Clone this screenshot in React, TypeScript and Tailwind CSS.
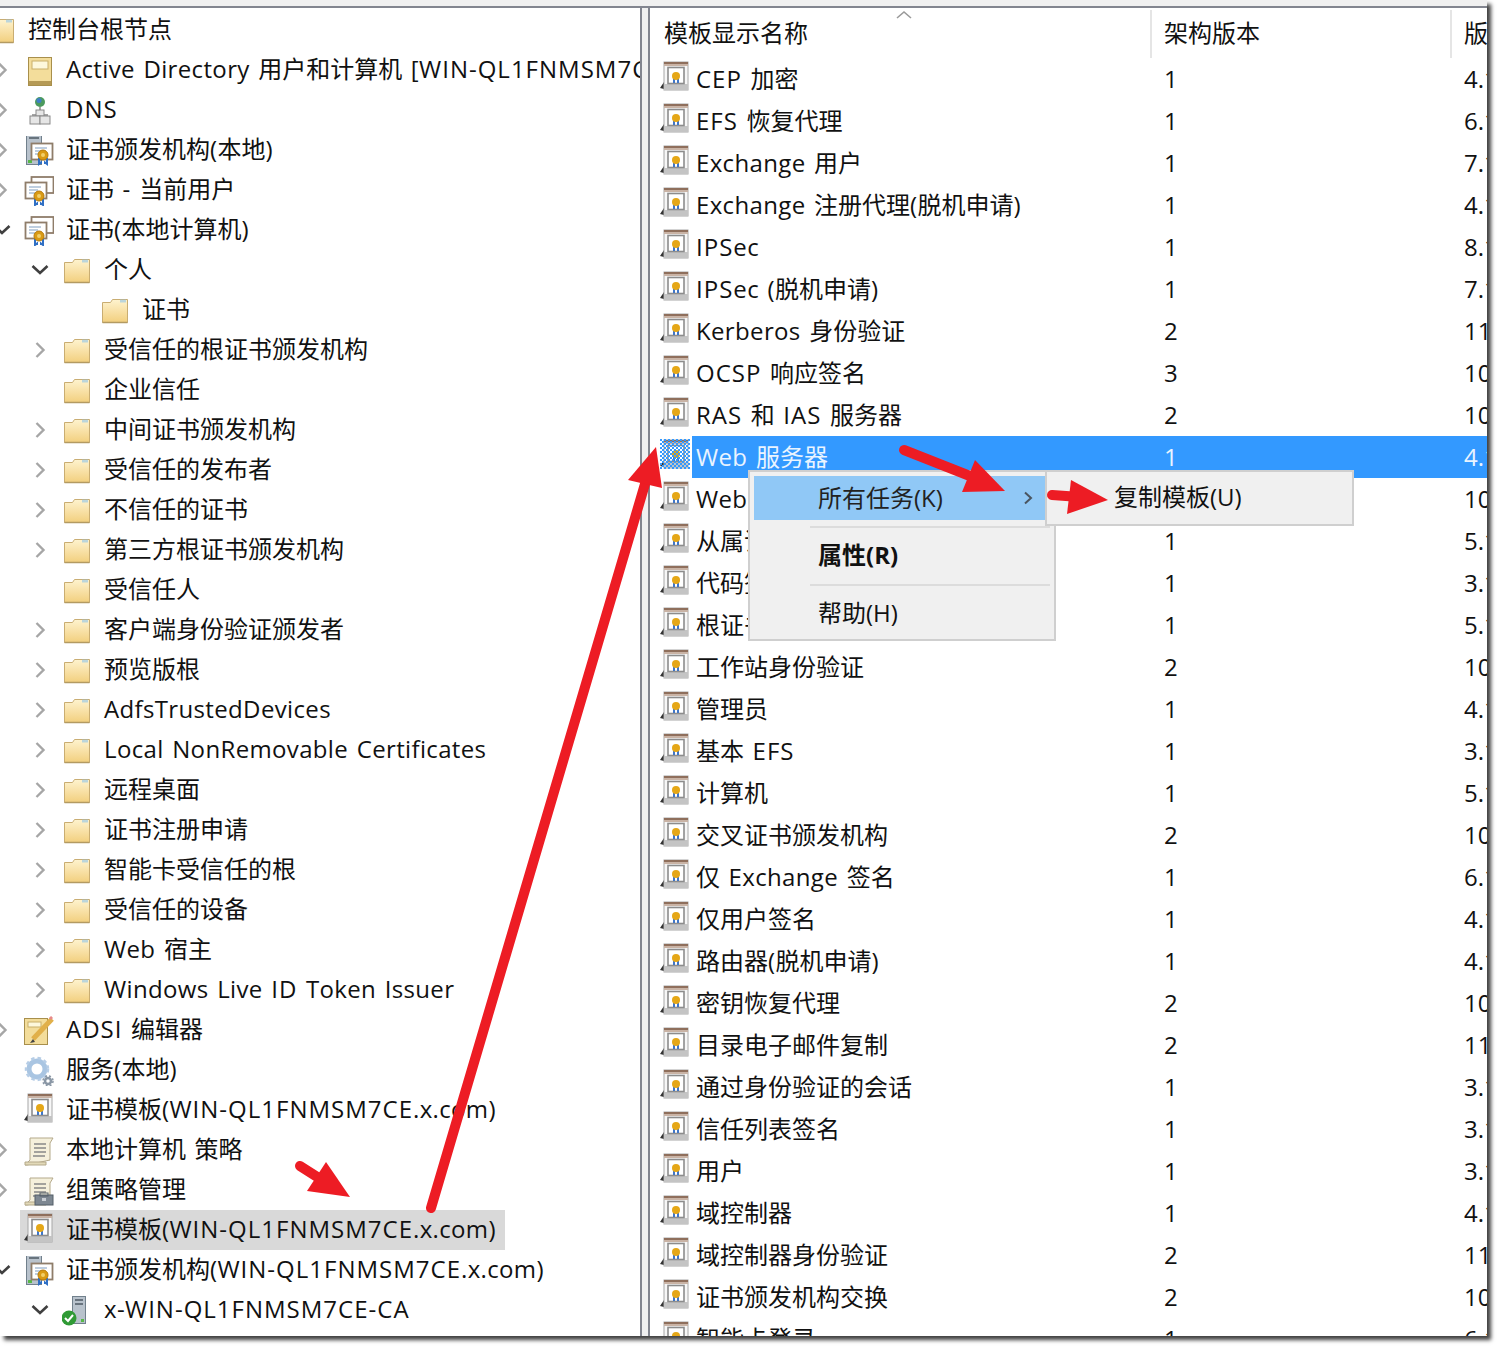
const FONT = "font-['Open_Sans','Noto_Sans_CJK_SC',sans-serif]"

const INDENT = ['-ml-[38px]', 'ml-0', 'ml-[38px]', 'ml-[76px]']

type IconName = 'folder' | 'box' | 'dns' | 'ca' | 'certs' | 'adsi' | 'gear' | 'tpl' | 'policy' | 'gpo' | 'server'

// the reference's latin font runs wider than Open Sans, capitals most of all
function Txt({ s }: { s: string }) {
  const parts = s.split(/([A-Z0-9][-A-Z0-9]+|[\u4e00-\u9fff]+)/).filter(Boolean)
  return (
    <>
      {parts.map((p, i) => {
        if (/^[\u4e00-\u9fff]/.test(p)) return <span key={i}>{p}</span>
        if (/^[A-Z0-9][-A-Z0-9]+$/.test(p)) return <span key={i} className="tracking-[1px]">{p}</span>
        return <span key={i} className="tracking-[0.35px] [word-spacing:2px]">{p}</span>
      })}
    </>
  )
}

function Folder() {
  return (
    <svg width="30" height="30" viewBox="0 0 30 30">
      <defs>
        <linearGradient id="fold" x1="0" y1="0" x2="0" y2="1">
          <stop offset="0" stopColor="#fef3cf" />
          <stop offset="1" stopColor="#f2cf7e" />
        </linearGradient>
      </defs>
      <path d="M2.5 6.5h8l2-3h15v23h-25z" fill="url(#fold)" stroke="#c9ad72" />
      <path d="M20 3.5h6v3h-6z" fill="#8fc3e8" opacity=".6" />
      <path d="M2.5 26.5h25" stroke="#b39a62" strokeWidth="1.5" />
    </svg>
  )
}

function Seal({ x, y }: { x: number; y: number }) {
  return (
    <g>
      <path d={`M${x - 4} ${y + 3}v6l2-1.5v1.5M${x + 4} ${y + 3}v6l-2-1.5v1.5`} stroke="#2f6fc4" strokeWidth="2" fill="none" />
      <circle cx={x} cy={y} r="5" fill="#d99a14" stroke="#b87a0a" />
      <circle cx={x} cy={y} r="2" fill="#f3cf6a" />
    </g>
  )
}

function Cert({ x, y }: { x: number; y: number }) {
  return (
    <g transform={`translate(${x} ${y})`}>
      <rect x="0.5" y="0.5" width="21" height="16" fill="#fff" stroke="#8f7d6a" strokeWidth="1.8" />
      <path d="M4 5h12M4 8h9M4 11h7" stroke="#a9bfd6" strokeWidth="1.4" />
    </g>
  )
}

function Template({ selected }: { selected?: boolean }) {
  return (
    <svg width="30" height="30" viewBox="0 0 30 30">
      <defs>
        <pattern id="dith" width="4" height="4" patternUnits="userSpaceOnUse">
          <rect width="2" height="2" fill="#3399ff" />
          <rect x="2" y="2" width="2" height="2" fill="#3399ff" />
        </pattern>
      </defs>
      <path d="M0 27l4-6v7z" fill="#333" />
      <rect x="4" y="1" width="24" height="28" fill="#f7f7f7" stroke="#a8a8a8" />
      <rect x="4" y="1" width="24" height="4" fill="#c9b3a5" />
      <rect x="4" y="1" width="24" height="2" fill="#8f6f5c" />
      <rect x="4" y="23" width="24" height="6" fill="#c4c4c4" />
      <rect x="8" y="6.5" width="16" height="16" fill="#fff" stroke="#8c8c8c" strokeWidth="1.6" />
      <path d="M14 17v5M18 17v5" stroke="#3f76c8" strokeWidth="2" />
      <circle cx="16" cy="15" r="4" fill="#e5a717" />
      {selected && <rect width="30" height="30" fill="url(#dith)" />}
    </svg>
  )
}

function TreeIcon({ name }: { name: IconName }) {
  if (name === 'folder') return <Folder />
  if (name === 'tpl')
    return (
      <span className="block -translate-y-[3px]">
        <Template />
      </span>
    )
  return (
    <svg width="30" height="30" viewBox="0 0 30 30">
      {name === 'box' && (
        <g>
          <rect x="4.5" y="1.5" width="23" height="28" fill="#f3dd9b" stroke="#a88f4c" />
          <rect x="8" y="5" width="16" height="8" fill="#fdf8dc" stroke="#c9b06a" />
          <rect x="5" y="25" width="22" height="4" fill="#b59a55" />
        </g>
      )}
      {name === 'dns' && (
        <g>
          <circle cx="16" cy="6" r="5" fill="#4c9a5e" />
          <circle cx="15" cy="4.5" r="2.5" fill="#3f7fc8" />
          <path d="M16 11v8M8 19h16" stroke="#888" strokeWidth="1.5" />
          <rect x="12" y="14" width="8" height="6" fill="#e6e6e6" stroke="#8a8a8a" />
          <rect x="6" y="20" width="10" height="8" fill="#e6e6e6" stroke="#8a8a8a" />
          <rect x="16" y="20" width="10" height="8" fill="#e6e6e6" stroke="#8a8a8a" />
        </g>
      )}
      {name === 'ca' && (
        <g transform="translate(0 -2)">
          <rect x="2.5" y="0.5" width="15" height="30" fill="#b8c2cc" stroke="#71808c" />
          <path d="M5 4h10" stroke="#4e5a64" strokeWidth="1.5" />
          <rect x="4" y="26" width="4" height="3" fill="#57b947" />
          <Cert x={7} y={9} />
          <Seal x={19} y={21} />
        </g>
      )}
      {name === 'certs' && (
        <g>
          <rect x="7.5" y="1" width="22" height="16" fill="#fff" stroke="#8f7d6a" strokeWidth="1.8" />
          <Cert x={1} y={6} />
          <Seal x={15} y={20} />
        </g>
      )}
      {name === 'adsi' && (
        <g>
          <rect x="0.5" y="2.5" width="23" height="26" fill="#f3dd9b" stroke="#a88f4c" />
          <rect x="4" y="6" width="13" height="5" fill="#fdf8dc" stroke="#c9b06a" />
          <path d="M28 3L9 23" stroke="#e1b04a" strokeWidth="5" />
          <path d="M28 3l-2-2" stroke="#e88a8a" strokeWidth="3" />
          <path d="M9 23l-3 4 5-1z" fill="#444" />
        </g>
      )}
      {name === 'gear' && (
        <g fill="none">
          <circle cx="13" cy="13" r="8" stroke="#a9c5e2" strokeWidth="5" />
          <circle cx="13" cy="13" r="11" stroke="#b6cde6" strokeWidth="2.5" strokeDasharray="3.5 3" />
          <circle cx="24" cy="25" r="3" stroke="#8a97a5" strokeWidth="2.5" />
          <circle cx="24" cy="25" r="5" stroke="#8a97a5" strokeWidth="1.5" strokeDasharray="2 2" />
        </g>
      )}
      {(name === 'policy' || name === 'gpo') && (
        <g>
          <path d="M6 2h23l-3 5v17l-23 5h-2l5-5z" fill="#f5f0dc" stroke="#b4a98a" />
          <path d="M1 26h21v3h-21z" fill="#e2d9b8" stroke="#b4a98a" />
          <path d="M10 8h12M10 12h12M10 16h12M9 20h12" stroke="#888" strokeWidth="1.5" />
          {name === 'gpo' && (
            <g>
              <rect x="11" y="19" width="18" height="10" fill="#7d8791" stroke="#555f69" />
              <rect x="16" y="17" width="8" height="3" fill="none" stroke="#555f69" />
              <rect x="18" y="22" width="4" height="3" fill="#c9ced4" />
            </g>
          )}
        </g>
      )}
      {name === 'server' && (
        <g>
          <rect x="10.5" y="0.5" width="13" height="27" fill="#b8c2cc" stroke="#71808c" />
          <path d="M13 4h8M13 8h8" stroke="#4e5a64" strokeWidth="1.5" />
          <rect x="19" y="23" width="3" height="3" fill="#57b947" />
          <circle cx="7" cy="22" r="7.5" fill="#2f9a35" />
          <path d="M3 22l3 3 5-6" stroke="#fff" strokeWidth="2" fill="none" />
        </g>
      )}
    </svg>
  )
}

type Node = { l: number; t: string; i: IconName; c?: 'r' | 'd'; sel?: boolean }

const tree: Node[] = [
  { l: 0, t: '控制台根节点', i: 'folder' },
  { l: 1, t: 'Active Directory 用户和计算机 [WIN-QL1FNMSM7CE.x.com]', i: 'box', c: 'r' },
  { l: 1, t: 'DNS', i: 'dns', c: 'r' },
  { l: 1, t: '证书颁发机构(本地)', i: 'ca', c: 'r' },
  { l: 1, t: '证书 - 当前用户', i: 'certs', c: 'r' },
  { l: 1, t: '证书(本地计算机)', i: 'certs', c: 'd' },
  { l: 2, t: '个人', i: 'folder', c: 'd' },
  { l: 3, t: '证书', i: 'folder' },
  { l: 2, t: '受信任的根证书颁发机构', i: 'folder', c: 'r' },
  { l: 2, t: '企业信任', i: 'folder' },
  { l: 2, t: '中间证书颁发机构', i: 'folder', c: 'r' },
  { l: 2, t: '受信任的发布者', i: 'folder', c: 'r' },
  { l: 2, t: '不信任的证书', i: 'folder', c: 'r' },
  { l: 2, t: '第三方根证书颁发机构', i: 'folder', c: 'r' },
  { l: 2, t: '受信任人', i: 'folder' },
  { l: 2, t: '客户端身份验证颁发者', i: 'folder', c: 'r' },
  { l: 2, t: '预览版根', i: 'folder', c: 'r' },
  { l: 2, t: 'AdfsTrustedDevices', i: 'folder', c: 'r' },
  { l: 2, t: 'Local NonRemovable Certificates', i: 'folder', c: 'r' },
  { l: 2, t: '远程桌面', i: 'folder', c: 'r' },
  { l: 2, t: '证书注册申请', i: 'folder', c: 'r' },
  { l: 2, t: '智能卡受信任的根', i: 'folder', c: 'r' },
  { l: 2, t: '受信任的设备', i: 'folder', c: 'r' },
  { l: 2, t: 'Web 宿主', i: 'folder', c: 'r' },
  { l: 2, t: 'Windows Live ID Token Issuer', i: 'folder', c: 'r' },
  { l: 1, t: 'ADSI 编辑器', i: 'adsi', c: 'r' },
  { l: 1, t: '服务(本地)', i: 'gear' },
  { l: 1, t: '证书模板(WIN-QL1FNMSM7CE.x.com)', i: 'tpl' },
  { l: 1, t: '本地计算机 策略', i: 'policy', c: 'r' },
  { l: 1, t: '组策略管理', i: 'gpo', c: 'r' },
  { l: 1, t: '证书模板(WIN-QL1FNMSM7CE.x.com)', i: 'tpl', sel: true },
  { l: 1, t: '证书颁发机构(WIN-QL1FNMSM7CE.x.com)', i: 'ca', c: 'd' },
  { l: 2, t: 'x-WIN-QL1FNMSM7CE-CA', i: 'server', c: 'd' },
]

const rows: [string, string, string][] = [
  ['CEP 加密', '1', '4.1'],
  ['EFS 恢复代理', '1', '6.1'],
  ['Exchange 用户', '1', '7.1'],
  ['Exchange 注册代理(脱机申请)', '1', '4.1'],
  ['IPSec', '1', '8.1'],
  ['IPSec (脱机申请)', '1', '7.1'],
  ['Kerberos 身份验证', '2', '110'],
  ['OCSP 响应签名', '3', '101'],
  ['RAS 和 IAS 服务器', '2', '101'],
  ['Web 服务器', '1', '4.1'],
  ['Web 服务器(脱机申请)', '1', '101'],
  ['从属证书颁发机构', '1', '5.1'],
  ['代码签名', '1', '3.1'],
  ['根证书颁发机构', '1', '5.1'],
  ['工作站身份验证', '2', '101'],
  ['管理员', '1', '4.1'],
  ['基本 EFS', '1', '3.1'],
  ['计算机', '1', '5.1'],
  ['交叉证书颁发机构', '2', '105'],
  ['仅 Exchange 签名', '1', '6.1'],
  ['仅用户签名', '1', '4.1'],
  ['路由器(脱机申请)', '1', '4.1'],
  ['密钥恢复代理', '2', '105'],
  ['目录电子邮件复制', '2', '115'],
  ['通过身份验证的会话', '1', '3.1'],
  ['信任列表签名', '1', '3.1'],
  ['用户', '1', '3.1'],
  ['域控制器', '1', '4.1'],
  ['域控制器身份验证', '2', '110'],
  ['证书颁发机构交换', '2', '106'],
  ['智能卡登录', '1', '6.1'],
]

function Chevron({ kind }: { kind?: 'r' | 'd' }) {
  if (kind === 'r')
    return (
      <svg width="12" height="18" viewBox="0 0 12 18" fill="none" stroke="#a6a6a6" strokeWidth="2.4">
        <path d="M2.5 2l7 7-7 7" />
      </svg>
    )
  if (kind === 'd')
    return (
      <svg width="18" height="12" viewBox="0 0 18 12" fill="none" stroke="#404040" strokeWidth="2.6">
        <path d="M1.5 2l7.5 7 7.5-7" />
      </svg>
    )
  return null
}

function TreeRow({ node }: { node: Node }) {
  return (
    <div className={`flex items-center h-10 whitespace-nowrap ${INDENT[node.l]}`}>
      <span className="w-6 -ml-[10px] shrink-0 flex items-center justify-center">
        <Chevron kind={node.c} />
      </span>
      <div className={`ml-[6px] h-10 pl-[4px] pr-[9px] shrink-0 flex items-center ${node.sel ? 'bg-[#d9d9d9]' : ''}`}>
        <span className="w-7 h-[30px] mr-[14px] shrink-0 translate-y-px">
          <TreeIcon name={node.i} />
        </span>
        <span className="-translate-y-px">
          <Txt s={node.t} />
        </span>
      </div>
    </div>
  )
}

function Arrow({ d, head }: { d: string; head: string }) {
  return (
    <g>
      <path d={d} fill="none" stroke="#ed1c24" strokeWidth="10" strokeLinecap="round" />
      <polygon points={head} fill="#ed1c24" />
    </g>
  )
}

export default function App() {
  return (
    <div className={`relative w-[1497px] h-[1346px] bg-white overflow-hidden text-[24px] leading-none text-[#111] ${FONT}`}>
      <div className="w-[1487px] h-[1336px] pt-[6px] bg-[#f0f0f0] shadow-[4px_4px_4px_rgba(0,0,0,0.75)]">
        <div className="flex h-[1330px] border-t-2 border-[#82858f]">
          {/* tree */}
          <div className="w-[640px] shrink-0 bg-white overflow-hidden pt-[2px]">
            {tree.map((n, i) => (
              <TreeRow key={i} node={n} />
            ))}
          </div>
          <div className="w-[10px] shrink-0 bg-[#f0f0f0] border-x-2 border-[#82858f]" />
          {/* list */}
          <div className="flex-1 min-w-0 bg-white overflow-hidden">
            <div className="relative flex h-[50px] pt-[2px] whitespace-nowrap">
              <div className="w-[500px] shrink-0 pl-[14px] flex items-center">
                <span className="-translate-y-px">模板显示名称</span>
              </div>
              <span className="w-[2px] shrink-0 bg-[#e5e5e5]" />
              <div className="w-[298px] shrink-0 pl-[12px] flex items-center">
                <span className="-translate-y-px">架构版本</span>
              </div>
              <span className="w-[2px] shrink-0 bg-[#e5e5e5]" />
              <div className="pl-[12px] shrink-0 flex items-center">
                <span className="-translate-y-px">版本</span>
              </div>
              <svg className="absolute left-[245px] top-[2px]" width="18" height="10" viewBox="0 0 18 10" fill="none" stroke="#9a9a9a" strokeWidth="1.6">
                <path d="M2 8l7-6 7 6" />
              </svg>
            </div>
            {rows.map((r, i) => (
              <div key={i} className="flex h-[42px] whitespace-nowrap">
                <div className="w-[42px] pl-[10px] pt-[3px] shrink-0">
                  <Template selected={i === 9} />
                </div>
                <div className={`flex-1 flex items-center ${i === 9 ? 'bg-[#3399ff] text-[#eaf4ff]' : ''}`}>
                  <span className="w-[472px] shrink-0 pl-[4px]">
                    <Txt s={r[0]} />
                  </span>
                  <span className="w-[300px] shrink-0">{r[1]}</span>
                  <span>{r[2]}</span>
                </div>
              </div>
            ))}
          </div>
        </div>
      </div>

      {/* context menu */}
      <div className="absolute left-[748px] top-[470px] w-[308px] h-[171px] border-2 border-[#cfcfcf] bg-[#f0f0f0] p-1">
        <div className="flex items-center h-11 bg-[#90c8f6] pl-[64px] pr-[17px] justify-between text-[#222]">
          <span>所有任务(K)</span>
          <svg width="10" height="14" viewBox="0 0 10 14" fill="none" stroke="#4a5560" strokeWidth="2">
            <path d="M2 1.5l6 5.5-6 5.5" />
          </svg>
        </div>
        <div className="ml-[56px] mt-[6px] h-[2px] bg-[#dcdcdc]" />
        <div className="flex items-center h-[56px] pl-[64px] font-bold -translate-y-px">属性(R)</div>
        <div className="ml-[56px] h-[2px] bg-[#dcdcdc]" />
        <div className="flex items-center h-[54px] pl-[64px]">帮助(H)</div>
      </div>
      <div className="absolute left-[1045px] top-[470px] w-[309px] h-[56px] border-2 border-[#cfcfcf] bg-[#f0f0f0] flex items-center pl-[67px] pb-[2px]">
        复制模板(U)
      </div>

      {/* red annotation arrows */}
      <svg className="absolute inset-0 pointer-events-none" width="1497" height="1346" viewBox="0 0 1497 1346">
        <Arrow d="M431 1208L645 484" head="656,447 628,480 662,488" />
        <Arrow d="M904 450L975 478" head="1005,491 975,460 962,492" />
        <Arrow d="M1052 495L1080 497" head="1108,500 1071,480 1067,514" />
        <Arrow d="M300 1166L322 1180" head="350,1197 326,1162 307,1191" />
      </svg>
    </div>
  )
}
